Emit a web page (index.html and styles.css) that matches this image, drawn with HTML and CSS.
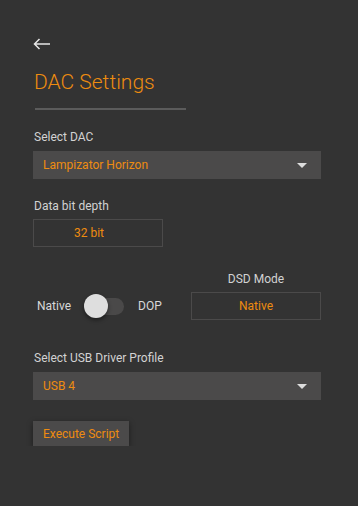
FILE: index.html
```html
<!DOCTYPE html>
<html lang="en">
<head>
    <meta charset="UTF-8">
    <meta name="viewport" content="width=device-width, initial-scale=1.0">
    <title>DAC Settings</title>
    <link rel="stylesheet" href="styles.css">
</head>
<body>
    <div class="page">
        <!-- Back arrow -->
        <button class="back" aria-label="Back">
            <svg width="18" height="18" viewBox="0 0 18 18">
                <path d="M6.5 4 L1.5 9 L6.5 14 M1.5 9 H17" fill="none" stroke="#e6e6e6" stroke-width="1.5"/>
            </svg>
        </button>

        <h1 class="title">DAC Settings</h1>
        <div class="divider"></div>

        <div class="label">Select DAC</div>
        <div class="select">
            <span>Lampizator Horizon</span>
            <span class="caret"></span>
        </div>

        <div class="label">Data bit depth</div>
        <div class="box box-depth">32 bit</div>

        <!-- Toggle and DSD mode -->
        <div class="dsd-row">
            <div class="switch-group">
                <span class="switch-text native">Native</span>
                <div class="switch">
                    <div class="track"></div>
                    <div class="knob"></div>
                </div>
                <span class="switch-text">DOP</span>
            </div>
            <div class="dsd">
                <div class="dsd-label">DSD Mode</div>
                <div class="box">Native</div>
            </div>
        </div>

        <div class="label label-usb">Select USB Driver Profile</div>
        <div class="select">
            <span>USB 4</span>
            <span class="caret"></span>
        </div>

        <button class="execute">Execute Script</button>
    </div>
</body>
</html>
```

FILE: styles.css
```css
/* Page base */
body {
    margin: 0;
    background-color: #333333;
    font-family: Roboto, "Liberation Sans", sans-serif;
    color: #d2d2d2;
}

.page {
    width: 288px;
    padding: 35px 0 0 33px;
}

/* Header */
.back {
    display: block;
    background: none;
    border: none;
    padding: 0;
    margin: 0;
    width: 18px;
    height: 18px;
    cursor: pointer;
}

.title {
    margin: 17px 0 0 1px;
    font-size: 21px;
    font-weight: 300;
    line-height: 25px;
    color: #ee8c10;
}

.divider {
    width: 151px;
    height: 2px;
    margin: 13px 0 0 2px;
    background-color: #5b5b5b;
}

/* Labels and fields */
.label {
    font-size: 12px;
    line-height: 14px;
    margin: 20px 0 7px 1px;
}

.label-usb {
    margin-top: 31px;
}

.select {
    display: flex;
    justify-content: space-between;
    align-items: center;
    height: 28px;
    padding: 0 14px 0 10px;
    background-color: #4b4a4a;
    color: #ee8c10;
    font-size: 12px;
}

.caret {
    width: 0;
    height: 0;
    border-left: 5px solid transparent;
    border-right: 5px solid transparent;
    border-top: 5px solid #dddddd;
}

.box {
    box-sizing: border-box;
    width: 130px;
    height: 28px;
    border: 1px solid #4b4a4a;
    color: #ee8c10;
    font-size: 12px;
    display: flex;
    align-items: center;
    justify-content: center;
}

.box-depth {
    margin-top: -1px;
    padding-right: 18px;
}

/* DSD row */
.dsd-row {
    display: flex;
    justify-content: space-between;
    align-items: flex-end;
    margin-top: 25px;
}

.switch-group {
    display: flex;
    align-items: center;
    height: 28px;
}

.switch-text {
    font-size: 12px;
    color: #d8d8d8;
}

.native {
    margin-left: 4px;
    margin-right: 13px;
}

.switch {
    position: relative;
    width: 40px;
    height: 24px;
    margin-right: 14px;
}

.track {
    position: absolute;
    left: 2px;
    top: 4px;
    width: 38px;
    height: 17px;
    border-radius: 9px;
    background-color: #4a4949;
}

.knob {
    position: absolute;
    left: 0;
    top: 0;
    width: 24px;
    height: 24px;
    border-radius: 50%;
    background-color: #dedede;
    box-shadow: 0 2px 4px rgba(0, 0, 0, 0.45);
}

.dsd-label {
    text-align: center;
    font-size: 12px;
    line-height: 14px;
    margin-bottom: 6px;
}

/* Execute button */
.execute {
    display: block;
    margin-top: 21px;
    height: 25px;
    padding: 0 10px;
    border: none;
    background-color: #4b4a4a;
    color: #ee8c10;
    font-family: Roboto, "Liberation Sans", sans-serif;
    font-size: 12px;
    box-shadow: 0 2px 6px rgba(0, 0, 0, 0.45);
    cursor: pointer;
}
```
